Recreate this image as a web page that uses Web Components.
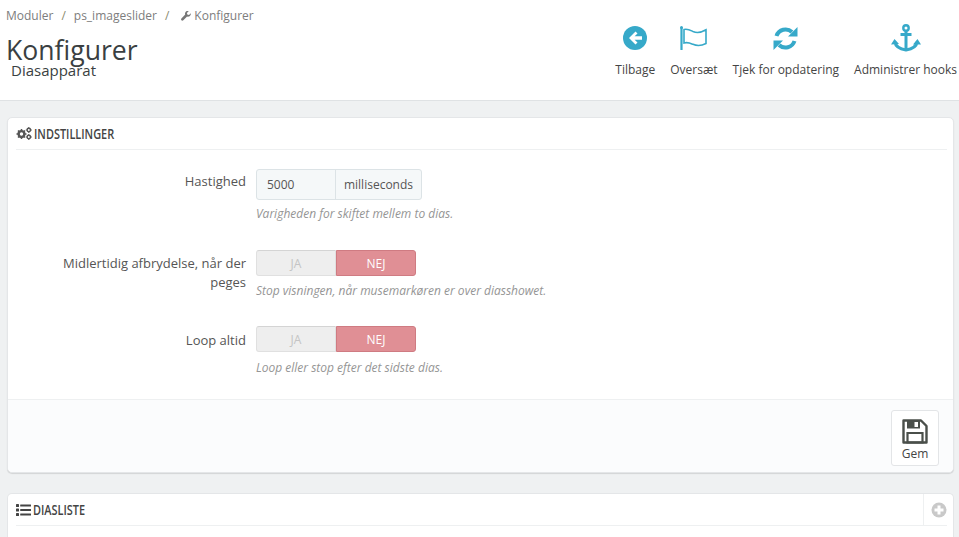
<!DOCTYPE html>
<html lang="da">
<head>
<meta charset="utf-8">
<title>Konfigurer</title>
<style>
html, body { margin: 0; height: 100%; overflow: hidden; }
body { background: #eff1f2; font-family: "Open Sans", "Liberation Sans", sans-serif; color: #555; }
</style>
</head>
<body>
<page-head breadcrumb="Moduler,ps_imageslider" current="Konfigurer" heading="Konfigurer" sub="Diasapparat">
  <tool-button label="Tilbage" icon="back"></tool-button>
  <tool-button label="Oversæt" icon="flag"></tool-button>
  <tool-button label="Tjek for opdatering" icon="refresh"></tool-button>
  <tool-button label="Administrer hooks" icon="anchor"></tool-button>
</page-head>
<ps-panel heading="INDSTILLINGER" icon="cogs">
  <form-row label="Hastighed" hint="Varigheden for skiftet mellem to dias.">
    <addon-input value="5000" unit="milliseconds"></addon-input>
  </form-row>
  <form-row class="sw" label="Midlertidig afbrydelse, når der peges" hint="Stop visningen, når musemarkøren er over diasshowet.">
    <yes-no></yes-no>
  </form-row>
  <form-row class="sw last" label="Loop altid" hint="Loop eller stop efter det sidste dias.">
    <yes-no></yes-no>
  </form-row>
  <save-button slot="footer"></save-button>
</ps-panel>
<ps-panel class="second" heading="DIASLISTE" icon="list" add></ps-panel>

<script>
const ICONS = {
  back: `<svg width="24" height="24" viewBox="0 0 24 24"><circle cx="12" cy="12" r="12" fill="#36a9c9"/><path d="M12.500 5.500 6 12l6.500 6.500 2-2-2.900-2.800H19v-3.400h-7.400l2.900-2.800z" fill="#fff"/></svg>`,
  flag: `<svg width="27" height="24" viewBox="0 0 27 24" fill="none" stroke="#36a9c9"><path d="M1.500 2v21.500" stroke-width="2.200" stroke-linecap="round"/><circle cx="1.500" cy="1.500" r="1.500" fill="#36a9c9" stroke="none"/><path d="M4 3.500c3.500-1 6 .5 9 2 4 1.800 8 1.200 13-1.700v13.700c-5 2.500-9 2.500-13 .8-3-1.300-5.500-2.500-9-1.300z" stroke-width="1.600"/></svg>`,
  refresh: `<svg width="25" height="25" viewBox="0 0 25 25" fill="none"><path d="M3.500 10a9.500 9.500 0 0 1 15.500-4" stroke="#36a9c9" stroke-width="4"/><path d="M24.500 1v9.500H15z" fill="#36a9c9"/><path d="M21.500 15a9.500 9.500 0 0 1-15.500 4" stroke="#36a9c9" stroke-width="4"/><path d="M.5 24v-9.500H10z" fill="#36a9c9"/></svg>`,
  anchor: `<svg width="30" height="28" viewBox="0 0 30 28" fill="none"><circle cx="15" cy="4" r="2.700" stroke="#36a9c9" stroke-width="2.400"/><path d="M15 6.500V26M9.500 10.500h11" stroke="#36a9c9" stroke-width="3"/><path d="M4 18c.5 4.500 5 7 11 8 6-1 10.500-3.500 11-8" stroke="#36a9c9" stroke-width="3"/><path d="M0 20.500 3.500 15l4.500 5zM22 20.500l4.500-5.500 3.500 5.500z" fill="#36a9c9"/></svg>`,
  wrench: `<svg width="10" height="10" viewBox="0 0 10 10"><path d="M9.800 2.300 8 4 6.300 3.600 5.900 2 7.700.3C6.400-.2 5 .2 4.400 1.200c-.5.800-.5 1.700-.2 2.400L.4 7.400c-.5.500-.5 1.300 0 1.900.5.500 1.300.5 1.900 0l3.800-3.800c.8.300 1.700.2 2.500-.3 1-.7 1.400-1.900 1.200-2.900z" fill="#777"/></svg>`,
  cogs: `<svg width="16" height="13" viewBox="0 0 16 13"><g fill="none" stroke="#555"><circle cx="5.500" cy="7" r="2.900" stroke-width="2.400"/><path d="M5.500 2v10M.5 7h10M2 3.500l7 7M9 3.500l-7 7" stroke-width="1.500" stroke-dasharray="1.700 6.600"/><circle cx="12.800" cy="3" r="1.700" stroke-width="1.500"/><circle cx="12.800" cy="10" r="1.700" stroke-width="1.500"/><path d="M12.800 0v6M9.800 3h6M12.800 7v6M9.800 10h6" stroke-width="1" stroke-dasharray="1 4"/></g></svg>`,
  list: `<svg width="15" height="12" viewBox="0 0 15 12" fill="#444"><rect y="0" width="3" height="3" rx=".6"/><rect y="4.500" width="3" height="3" rx=".6"/><rect y="9" width="3" height="3" rx=".6"/><rect x="4.200" y=".4" width="10.800" height="2.200" rx=".4"/><rect x="4.200" y="4.900" width="10.800" height="2.200" rx=".4"/><rect x="4.200" y="9.400" width="10.800" height="2.200" rx=".4"/></svg>`,
  plus: `<svg width="16" height="16" viewBox="0 0 16 16"><circle cx="8" cy="8" r="7.500" fill="#c9c9c9"/><path d="M6.500 3.500h3v3h3v3h-3v3h-3v-3h-3v-3h3z" fill="#fff"/></svg>`,
  save: `<svg width="26" height="25" viewBox="0 0 26 25" fill="none"><path d="M1.500 1.500h17.500l5.500 5.500v16.500H1.500z" stroke="#4a4f4a" stroke-width="2.400" stroke-linejoin="round"/><path d="M5 1.500h13v8H5z" fill="#4a4f4a"/><rect x="12.500" y="3" width="3.500" height="5" fill="#fff"/><path d="M5.500 14h15v9.500h-15z" stroke="#4a4f4a" stroke-width="2.200"/></svg>`
};

class PageHead extends HTMLElement {
  constructor() {
    super();
    this.attachShadow({mode: "open"});
  }
  connectedCallback() {
    const crumbs = this.getAttribute("breadcrumb").split(",");
    const links = crumbs.map(c => `<span>${c}</span><i>/</i>`).join("");
    this.shadowRoot.innerHTML = `
<style>
:host { display: flex; justify-content: space-between; box-sizing: border-box; height: 101px; background: #fff; border-bottom: 1px solid #dfe2e4; }
.left { padding: 8px 0 0 6px; }
.crumbs { display: flex; align-items: center; font-size: 12px; line-height: 16px; color: #7d7d7d; }
.crumbs i { font-style: normal; margin: 0 8px; color: #8a8a6e; }
.crumbs i:last-of-type { margin-right: 12px; }
.crumbs svg { margin-right: 3px; }
h1 { margin: 9px 0 0 0; font-size: 26.600px; font-weight: 400; line-height: 34px; color: #3a3f42; }
h2 { margin: -6px 0 0 5px; font-size: 15px; font-weight: 400; line-height: 18px; color: #3a3f42; }
.tools { display: flex; gap: 15px; padding: 22px 2px 0 0; align-items: flex-start; }
</style>
<div class="left">
  <div class="crumbs">${links}${ICONS.wrench}<span>${this.getAttribute("current")}</span></div>
  <h1>${this.getAttribute("heading")}</h1>
  <h2>${this.getAttribute("sub")}</h2>
</div>
<div class="tools"><slot></slot></div>`;
  }
}
customElements.define("page-head", PageHead);

class ToolButton extends HTMLElement {
  constructor() {
    super();
    this.attachShadow({mode: "open"});
  }
  connectedCallback() {
    this.shadowRoot.innerHTML = `
<style>
:host { display: flex; flex-direction: column; align-items: center; font-size: 12px; color: #444; }
.ic { height: 32px; display: flex; align-items: center; justify-content: center; }
.tx { margin-top: 8px; line-height: 16px; white-space: nowrap; }
</style>
<div class="ic">${ICONS[this.getAttribute("icon")]}</div>
<div class="tx">${this.getAttribute("label")}</div>`;
  }
}
customElements.define("tool-button", ToolButton);

class PsPanel extends HTMLElement {
  constructor() {
    super();
    this.attachShadow({mode: "open"});
  }
  connectedCallback() {
    const add = this.hasAttribute("add") ? `<div class="add">${ICONS.plus}</div>` : "";
    this.shadowRoot.innerHTML = `
<style>
:host { display: block; box-sizing: border-box; margin: 16px 5px 0 7px; background: #fff; border: 1px solid #e4e6e8; border-radius: 5px; box-shadow: 0 1px 1px rgba(0,0,0,.12); }
:host(.second) { margin-top: 20px; height: 44px; border-bottom: 0; border-radius: 5px 5px 0 0; box-shadow: none; }
.heading { display: flex; align-items: center; gap: 2px; height: 31px; margin: 0 6px 0 8px; border-bottom: 1px solid #eef0f1; font-size: 14px; font-weight: 600; color: #444; }
.heading .t { flex: 1; }
.heading .t span { display: inline-block; transform: scaleX(.78); transform-origin: left center; }
.add { align-self: stretch; width: 23px; display: flex; align-items: center; justify-content: flex-end; border-left: 1px solid #eef0f1; }
.body { padding-top: 19px; }
.footer { display: flex; justify-content: flex-end; padding: 10px 14px 6px; background: #fbfcfd; border-top: 1px solid #eef0f1; border-radius: 0 0 5px 5px; }
</style>
<div class="heading">${ICONS[this.getAttribute("icon")]}<span class="t"><span>${this.getAttribute("heading")}</span></span>${add}</div>
${this.children.length ? `<div class="body"><slot></slot></div><div class="footer"><slot name="footer"></slot></div>` : ""}`;
  }
}
customElements.define("ps-panel", PsPanel);

class FormRow extends HTMLElement {
  constructor() {
    super();
    this.attachShadow({mode: "open"});
  }
  connectedCallback() {
    this.shadowRoot.innerHTML = `
<style>
:host { display: grid; grid-template-columns: 238px 1fr; column-gap: 10px; padding-bottom: 28px; font-size: 13px; }
:host(.sw) { padding-bottom: 27px; }
:host(.last) { padding-bottom: 23px; }
.lab { text-align: right; color: #555; line-height: 19px; padding: 3px 0 0 48px; }
:host(.sw) .lab { padding-top: 4px; }
:host(.last) .lab { padding-top: 5px; }
.hint { margin-top: 6px; font-size: 12px; line-height: 16px; font-style: italic; color: #959595; }
:host(.sw) .hint { margin-top: 7px; }
:host(.last) .hint { margin-top: 8px; }
</style>
<div class="lab">${this.getAttribute("label")}</div>
<div><slot></slot><div class="hint">${this.getAttribute("hint")}</div></div>`;
  }
}
customElements.define("form-row", FormRow);

class AddonInput extends HTMLElement {
  constructor() {
    super();
    this.attachShadow({mode: "open"});
  }
  connectedCallback() {
    this.shadowRoot.innerHTML = `
<style>
:host { display: flex; width: 166px; height: 31px; box-sizing: border-box; border: 1px solid #dce3e6; border-radius: 3px; background: #f5f8f9; font-size: 12px; color: #555; }
div { display: flex; align-items: center; }
.v { width: 78px; padding-left: 10px; box-sizing: border-box; }
.u { flex: 1; justify-content: center; border-left: 1px solid #dce3e6; }
</style>
<div class="v">${this.getAttribute("value")}</div><div class="u">${this.getAttribute("unit")}</div>`;
  }
}
customElements.define("addon-input", AddonInput);

class YesNo extends HTMLElement {
  constructor() {
    super();
    this.attachShadow({mode: "open"});
  }
  connectedCallback() {
    this.shadowRoot.innerHTML = `
<style>
:host { display: flex; width: 160px; height: 26px; font-size: 12px; }
div { flex: 1; display: flex; align-items: center; justify-content: center; box-sizing: border-box; }
.off { background: #eee; color: #c4c4c4; border: 1px solid #e0e0e0; border-top-color: #d4d4d4; border-radius: 3px 0 0 3px; }
.on { background: #e08f95; color: #fff; border: 1px solid #cf7b82; border-radius: 0 3px 3px 0; }
</style>
<div class="off">JA</div><div class="on">NEJ</div>`;
  }
}
customElements.define("yes-no", YesNo);

class SaveButton extends HTMLElement {
  constructor() {
    super();
    this.attachShadow({mode: "open"});
  }
  connectedCallback() {
    this.shadowRoot.innerHTML = `
<style>
:host { display: flex; flex-direction: column; align-items: center; box-sizing: border-box; width: 48px; height: 56px; padding-top: 8px; background: #fff; border: 1px solid #e3e5e7; border-radius: 3px; font-size: 12px; color: #444; }
span { line-height: 16px; margin-top: 2px; }
</style>
${ICONS.save}<span>Gem</span>`;
  }
}
customElements.define("save-button", SaveButton);
</script>
</body>
</html>
